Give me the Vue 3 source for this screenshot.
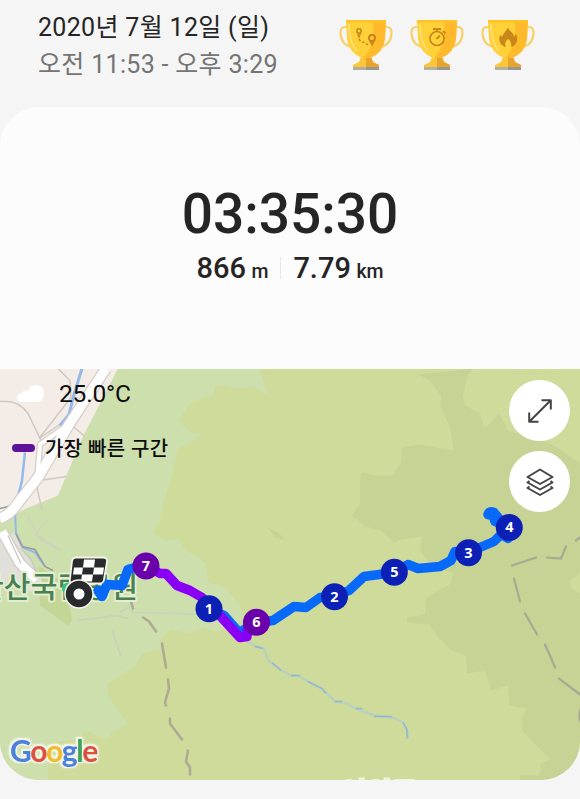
<template>
  <div class="page">
    <header class="header">
      <div class="when">
        <div class="date">2020년 7월 12일 (일)</div>
        <div class="range">오전 11:53 - 오후 3:29</div>
      </div>
      <div class="trophies">
        <svg v-for="t in trophies" :key="t" class="trophy" viewBox="0 0 54 52">
          <path d="M9 8H6Q1.500 8 1.500 14Q2 26 13 28M45 8H48Q52.500 8 52.500 14Q52 26 41 28" fill="none" stroke="#f8cf68" stroke-width="2.200" />
          <path d="M22 38H32L34 43L40 46V49H14V46L20 43Z" fill="#fbc638" />
          <path d="M27 38H32L34 43L40 46V49H27Z" fill="#e9a42c" />
          <path d="M7 1H47L46 20Q44 34 31 39H23Q10 34 8 20Z" fill="#ffd138" />
          <path d="M34 1H47L46 20Q44 34 31 39H24Q36 28 34 1Z" fill="#ffba2b" />
          <path d="M7 1H47V3.500H7Z" fill="#ffc229" />
          <path d="M10 5Q10 24 18 32" fill="none" stroke="#ffe07a" stroke-width="1.500" />
          <path d="M14 48H40V51H14Z" fill="#b2b0a5" />
          <path d="M27 48H40V51H27Z" fill="#969991" />
          <g v-if="t === 'route'" fill="none" stroke="#c88718">
            <circle cx="20" cy="12" r="2.200" stroke-width="1.600" />
            <path d="M18.500 14.500L20 18L21.500 14.500" stroke-width="1.300" />
            <circle cx="33" cy="19" r="3.100" stroke-width="2.100" />
            <path d="M30.500 22L33 26.500L35.500 22Z" fill="#c88718" stroke-width="1" />
            <path d="M20 20L22 23L26 23.500L30 27" stroke-width="1.400" stroke-dasharray="2.500 2" />
          </g>
          <g v-else-if="t === 'watch'" fill="none" stroke="#c88718">
            <circle cx="27" cy="19.500" r="7" stroke-width="1.700" />
            <path d="M23 10H31M27 10V12M33 12L35.500 14.500" stroke-width="2" />
            <path d="M26.500 20L30 16.500" stroke-width="2" />
          </g>
          <path v-else d="M27 8C28 13 33 13 33 18L35 15C38 21 35 27 30 28C31 24 29 21 27 20C25 22 23 24 25 28C19 27 17 21 19 16L21 18C22 14 25 13 27 8Z" fill="#c88718" />
        </svg>
      </div>
    </header>

    <main class="card">
      <section class="summary">
        <div class="duration">03:35:30</div>
        <div class="stats">
          <div class="stat climb"><b>866</b><span>m</span></div>
          <div class="stat distance"><b>7.79</b><span>km</span></div>
        </div>
      </section>

      <section class="map">
        <svg class="canvas" viewBox="0 368.500 580 411">
          <!-- 지형 -->
          <rect y="368" width="580" height="413" fill="#cfdb9b" />
          <path d="M0 368H260L262 377L268 394L253 386L237 388L222 384L215 387L213 395L200 398L190 403L178 420L191 432L203 434L190 442L178 448L172 475L164 500L160 520L153 533L165 540L179 538L185 550L194 554L206 563L208 582L225 587L240 605L246 620L230 624L216 631L203 627L190 633L170 629L160 640L161 649L143 652L135 665L120 675L107 683L108 695L118 710L127 722L110 733L108 739L85 730L79 739L48 742V781H0Z" fill="#cedfae" />
          <path d="M418 374L474 368H580V781H520V775H539L541 763L550 759L522 730L522 718L527 708L509 705L508 685L491 690L485 670L467 673L466 656L450 649L437 635L429 624L407 622V617L425 614L426 598L438 590L450 584L453 573L430 563L420 550L422 536L402 539L394 542L381 530L365 526L352 515L360 503V480L362 472L376 475L393 475L401 462L402 447L418 444L454 450L450 427L440 405L441 395L430 380Z" fill="#c7d394" />
          <path d="M468 374L463 395L465 405L480 413L485 428L499 413L508 430L550 443L562 450L580 463V368H474Z" fill="#cfdb9b" />
          <path d="M580 572L569 581L572 588L580 593Z" fill="#cfdb9b" />
          <path d="M268 527L278 532L286 540L275 537Z" fill="#c7d394" />
          <path d="M38 565L65 583L72 620L68 625L40 605Z" fill="#c3d696" />
          <path d="M0 368H118L82 438L58 495L24 509L0 522Z" fill="#f4ece7" />
          <path d="M0 535L14 533L49 592L20 590L0 579Z" fill="#e0dfd9" />

          <!-- 도로와 물길 -->
          <g fill="none" stroke="#cfc9c4" stroke-width="1.500">
            <path d="M0 401Q18 399 28 413L41 440L37 487L42 510" />
            <path d="M58 368L70 380L71 397L39 438L66 420L85 436" />
            <path d="M40 480L66 476" />
            <path d="M28 516L42 541L61 550L35 533L48 519" stroke="#cdd3bd" />
            <path d="M77 620L116 615L128 618M112 630L121 656" stroke="#c8d1b9" />
            <path d="M120 612L133 604L132 612L214 614L232 620" stroke="#c8d3bb" />
          </g>
          <g fill="none" stroke="#94b9ec" stroke-width="3">
            <path d="M82 368L74 394L69 414L60 425" />
            <path d="M25 452L22 480L17 500" stroke-width="2.500" />
            <path d="M15 510L16 533L23 547L35 552L45 566" stroke-width="2" />
          </g>
          <path d="M0 508L12 505L13 515M16 533L22 546L35 549L45 566L53 570" fill="none" stroke="#999c99" stroke-width="1.500" />
          <g fill="none" stroke-linejoin="round">
            <path d="M106 368L69 424L38 477L19 501Q12 513 0 518M2 531Q10 546 20 563L37 579" stroke="#d5cfc9" stroke-width="12" />
            <path d="M67 425L40 444L37 480" stroke="#d5cfc9" stroke-width="6.500" />
            <path d="M106 368L69 424L38 477L19 501Q12 513 0 518" stroke="#fff" stroke-width="9.500" />
            <path d="M67 425L40 444L37 480" stroke="#fff" stroke-width="4" />
            <path d="M2 531Q10 546 20 563L37 579" stroke="#fff" stroke-width="9" />
            <path d="M8 535L21 563M21 548L31 559L37 573" stroke="#c9c7c1" stroke-width="1.300" />
          </g>
          <path d="M246 640L254 645L264 648L268 660L280 669L291 675L300 676L310 682L322 688L335 701L345 702L356 708L374 715L393 717L403 722L408 732V738" fill="none" stroke="#b9d0bd" stroke-width="2.500" />
          <path d="M255 646L263 648M272 662L281 670M291 675H300M308 681L322 688L326 693M335 701H342M356 708L362 708M374 716H392M403 722L407 729V738" fill="none" stroke="#91b8c9" stroke-width="1.500" />
          <g class="trail">
            <path d="M131 601L133 608M143 617L149 621L156 631M162 643L166 667M168 679L169 688L165 702L166 705M170 718V723L182 739M188 750L186 761L190 767V774" />
            <path d="M512 565L536 557M547 557L561 558L566 546M576 540L580 537M514 578L520 601M525 613L537 634M545 644L550 655L555 667M559 678L580 694" class="gray" />
          </g>
          <path d="M580 707Q577 715 580 723Z" fill="#a2a398" />

          <text class="park" x="-23" y="597" textLength="161">한산국립공원</text>
          <text class="cut" x="341" y="796" textLength="76" lengthAdjust="spacingAndGlyphs">여의도</text>

          <!-- 경로 -->
          <g class="route">
            <path class="blue" d="M98 590L102 596L107 584L122 585L128 569L138 566L146 566" />
            <path class="blue" d="M209 608L224 615L239 632L256 622L273 620L294 606L306 607L320 597L335 596L349 590L364 576L394 572L408 564L418 568L440 566L451 560L455 551L468 552L494 541L501 534L508 538L509 527L495 521L493 515L488 514Q489 510 494 512L499 518" />
            <path class="violet" d="M146 565L160 573L166 573L177 585L190 590L202 597L218 613L240 637L247 636L248 626L256 622" />
          </g>

          <!-- 도착 지점 -->
          <circle cx="68" cy="588" r="6" fill="#35c27a" />
          <g class="flag">
            <path d="M76 557H103Q107.500 557 107 561L104 579Q103.500 583 99 583H73Q69 583 70 578L72 561Q72.500 557 76 557Z" fill="#292a2d" stroke="#f4f4e9" stroke-width="1.800" />
            <path d="M84 559H95L94 567H83ZM74 567H83L82 574H73ZM94 567H104L103 574H93ZM82 574H93L92 581H81Z" fill="#fff" />
            <circle cx="79" cy="593.500" r="14" fill="#292a2d" stroke="#f4f4e9" stroke-width="1.500" />
            <circle cx="79" cy="593.500" r="5.500" fill="#fff" />
          </g>

          <g v-for="m in markers" :key="m.n" class="marker">
            <circle :cx="m.x" :cy="m.y" r="13.500" :fill="m.fast ? '#6900ab' : '#0c20b5'" />
            <text :x="m.x" :y="m.y + 4.800">{{ m.n }}</text>
          </g>

          <text class="google" x="10" y="761"><tspan fill="#4b80df">G</tspan><tspan fill="#dc5040">o</tspan><tspan fill="#f2bb2e">o</tspan><tspan fill="#4b80df">g</tspan><tspan fill="#3fa35b">l</tspan><tspan fill="#dc5040">e</tspan></text>
        </svg>

        <div class="legend">
          <div class="weather">
            <svg width="28" height="20" viewBox="0 0 28 20">
              <path d="M5 18Q0 18 0 14Q0 9 5 9Q7 5 11 7Q13 0 20 1Q27 2 27 9Q27 18 19 18Z" fill="#fff" />
            </svg>
            <span>25.0°C</span>
          </div>
          <div class="fastest"><i></i><span>가장 빠른 구간</span></div>
        </div>

        <div class="controls">
          <button type="button" aria-label="expand">
            <svg width="26" height="26" viewBox="0 0 26 26">
              <path d="M2.500 23.500L23.500 2.500M14.500 2.200H23.800V11.500M2.200 14.500V23.800H11.500" />
            </svg>
          </button>
          <button type="button" aria-label="layers">
            <svg width="28" height="28" viewBox="0 0 28 28">
              <path d="M14 1.500L26.500 9L14 16L1.500 9Z" />
              <path d="M3.500 13L1.500 14.500L14 21.500L26.500 14.500L24.500 13M3.500 18.500L1.500 20L14 27L26.500 20L24.500 18.500" />
            </svg>
          </button>
        </div>
      </section>
    </main>
  </div>
</template>

<script setup>
const trophies = ['route', 'watch', 'flame']

// 1km 단위 지점 (fast: 가장 빠른 구간)
const markers = [
  { n: 7, x: 146, y: 565.5, fast: true },
  { n: 1, x: 209, y: 608.3 },
  { n: 6, x: 256.5, y: 621.8, fast: true },
  { n: 2, x: 334.5, y: 596.3 },
  { n: 5, x: 394.3, y: 571.8 },
  { n: 3, x: 468.5, y: 552.3 },
  { n: 4, x: 509.3, y: 527 },
]
</script>

<style>
body { margin: 0; background: #f5f5f5; }
</style>

<style scoped>
.page {
  box-sizing: border-box;
  width: 580px;
  height: 799px;
  overflow: hidden;
  background: #f5f5f5;
  color: #252525;
  font-family: Roboto, "Noto Sans CJK KR", sans-serif;
}

/* ── 상단 ── */
.header {
  box-sizing: border-box;
  height: 107px;
  padding: 9px 45px 0 38px;
  display: flex;
  justify-content: space-between;
}
.date, .range {
  height: 37px;
  line-height: 37px;
  font-size: 25px;
  letter-spacing: 0.32px;
  white-space: nowrap;
}
.range { color: #747474; }
.trophies { display: flex; gap: 17px; padding-top: 10px; }
.trophy { width: 54px; height: 52px; }

/* ── 카드 ── */
.card {
  height: 672.5px;
  border-radius: 39px;
  overflow: hidden;
  background: #fcfcfc;
}
.summary {
  box-sizing: border-box;
  height: 261.5px;
  padding-top: 74px;
}
.duration {
  height: 66px;
  line-height: 66px;
  font-size: 55px;
  font-weight: 500;
  text-align: center;
}
.stats {
  display: flex;
  justify-content: center;
  padding-top: 3px;
}
.stat {
  display: flex;
  align-items: baseline;
  height: 36px;
  line-height: 36px;
  font-weight: 500;
}
.stat b { font-size: 29px; font-weight: 500; }
.stat span { font-size: 19.5px; margin-left: 5.5px; }
.climb { padding-right: 12px; }
.distance {
  padding-left: 13px;
  background: linear-gradient(#e8e8e8, #e8e8e8) 0 50% / 1px 22px no-repeat;
}

/* ── 지도 ── */
.map { position: relative; height: 411px; }
.canvas { display: block; width: 580px; height: 411px; }
.trail path { fill: none; stroke: #b0a995; stroke-width: 2.6; stroke-linecap: round; }
.trail .gray { stroke: #a6aa93; stroke-width: 2.2; }
.route path { fill: none; stroke-width: 9.5; stroke-linejoin: round; stroke-linecap: round; }
.route .blue { stroke: #0669fa; }
.route .violet { stroke: #8a00f5; }
.park {
  font-size: 29px;
  font-weight: 500;
  fill: #498052;
  stroke: #e3edcf;
  stroke-width: 4px;
  stroke-linejoin: round;
  paint-order: stroke;
}
.cut {
  font-size: 22px;
  font-weight: 700;
  fill: #eef3dc;
  stroke: #eef3dc;
  stroke-width: 2px;
}
.marker text {
  fill: #fff;
  font-size: 14.5px;
  font-weight: 700;
  font-family: "Noto Sans", sans-serif;
  text-anchor: middle;
}
.google {
  font-family: Lato, sans-serif;
  font-size: 30px;
  font-weight: 700;
  letter-spacing: -1.4px;
  filter:
    drop-shadow(1.3px 0 0 #f0f4e3)
    drop-shadow(-1.3px 0 0 #f0f4e3)
    drop-shadow(0 1.3px 0 #f0f4e3)
    drop-shadow(0 -1.3px 0 #f0f4e3)
    drop-shadow(0 0 1px #f0f4e3);
}

/* ── 지도 위 정보 ── */
.legend { position: absolute; left: 12px; top: 8px; color: #0c0c0c; }
.weather { display: flex; align-items: center; height: 34px; padding-left: 5px; }
.weather span { margin-left: 14px; font-size: 24.5px; letter-spacing: -0.2px; }
.fastest { display: flex; align-items: center; height: 30px; margin-top: 22px; }
.fastest i { width: 23px; height: 8px; border-radius: 4px; background: #5e129a; }
.fastest span {
  margin-left: 10px;
  font-size: 20px;
  font-weight: 500;
  letter-spacing: 0.4px;
  white-space: nowrap;
}

.controls {
  position: absolute;
  top: 11.5px;
  right: 10px;
  display: flex;
  flex-direction: column;
  gap: 10px;
}
.controls button {
  display: flex;
  align-items: center;
  justify-content: center;
  width: 61px;
  height: 61px;
  padding: 0;
  border: 0;
  border-radius: 50%;
  background: #fff;
}
.controls path { fill: none; stroke: #444; stroke-width: 2; stroke-linejoin: round; }
</style>
